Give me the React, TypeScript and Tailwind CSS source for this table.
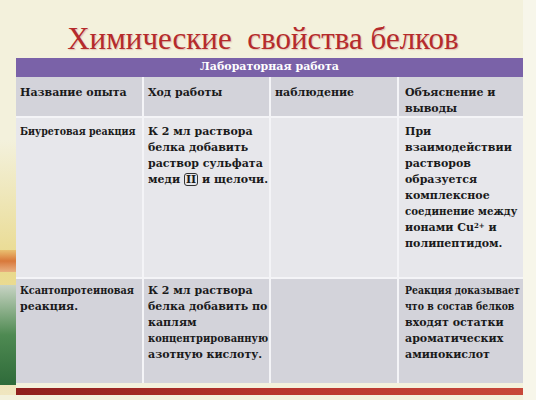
import React from 'react';

const cell = "px-1 pt-1 text-[11px] leading-4 font-bold text-[#1a1a1a] overflow-hidden";

function Lines({ items }: { items: string[] }) {
  return (
    <>
      {items.map((t, i) => (
        <div key={i} className="whitespace-nowrap">{t}</div>
      ))}
    </>
  );
}

// long lines squeezed horizontally, like the stretched slide text
function Tight({ children, k }: { children: React.ReactNode; k: string }) {
  return (
    <div className="whitespace-nowrap">
      <span className={`inline-block origin-left ${k}`}>{children}</span>
    </div>
  );
}

export default function App() {
  return (
    <div
      className="relative w-[536px] h-[400px] overflow-hidden bg-[#f3f1dc] flex flex-col"
      style={{ fontFamily: '"DejaVu Serif", "Liberation Serif", serif' }}
    >
      {/* left decorative picture strip */}
      <div className="absolute left-0 top-[140px] w-[16px] h-[255px] bg-gradient-to-b from-[#f3f1dc] via-[#e9d98a] to-[#f0e6c0]" />
      <div className="absolute left-0 top-[250px] w-[16px] h-[22px] bg-gradient-to-b from-[#e9c070] via-[#d8783a] to-[#e8b080]" />
      <div className="absolute left-0 top-[285px] w-[16px] h-[100px] bg-gradient-to-b from-[#c8d4c4] via-[#4e8a52] to-[#2f6b3a]" />
      <div className="absolute right-0 top-0 w-[13px] h-[400px] bg-[#f7f6ea]" />

      {/* title */}
      <div className="h-[58px] flex items-end justify-center pr-[10px]">
        <h1
          className="text-[31px] leading-none pb-[4px] text-[#b52b2c] whitespace-pre"
          style={{ fontFamily: '"Liberation Serif", serif', textShadow: '1px 1px 1px rgba(180,60,60,0.25)' }}
        >
          Химические  свойства белков
        </h1>
      </div>

      {/* table */}
      <div className="relative ml-[16px] w-[507px] bg-[#f6f6f8] flex flex-col">
        <div className="h-[19px] bg-[#7a62a8] flex items-center justify-center text-white text-[11px] font-bold">
          Лабораторная работа
        </div>
        <div className="grid grid-cols-[126px_125px_126px_124px] gap-x-[2px] bg-[#f4f4f7]">
          {/* header row */}
          <div className="h-[39px] bg-[#d3d3da] px-1 pt-[8px] text-[11px] leading-4 font-bold text-[#1a1a1a]">Название опыта</div>
          <div className="h-[39px] bg-[#d3d3da] px-1 pt-[8px] text-[11px] leading-4 font-bold text-[#1a1a1a]">Ход работы</div>
          <div className="h-[39px] bg-[#d3d3da] px-1 pt-[8px] text-[11px] leading-4 font-bold text-[#1a1a1a]">наблюдение</div>
          <div className="h-[39px] bg-[#d3d3da] pl-[6px] pt-[8px] text-[11px] leading-4 font-bold text-[#1a1a1a]">
            <Lines items={["Объяснение и", "выводы"]} />
          </div>

          {/* row 1 */}
          <div className={`mt-[2px] h-[159px] bg-[#e7e7eb] ${cell} pt-[6px]`}>
            <Tight k="scale-x-[0.86]">Биуретовая реакция</Tight>
          </div>
          <div className={`mt-[2px] h-[159px] bg-[#e7e7eb] ${cell} pt-[6px]`}>
            <Lines items={["К 2 мл раствора", "белка добавить", "раствор сульфата"]} />
            <div className="whitespace-nowrap">
              меди <span className="inline-block border border-[#333] rounded-[3px] px-[1px] leading-[11px]">II</span> и щелочи.
            </div>
          </div>
          <div className="mt-[2px] h-[159px] bg-[#e7e7eb]" />
          <div className={`mt-[2px] h-[159px] bg-[#e7e7eb] pl-[6px] ${cell} pt-[6px]`}>
            <Lines items={["При", "взаимодействии", "растворов", "образуется", "комплексное"]} />
            <Tight k="scale-x-[0.93]">соединение между</Tight>
            <div className="whitespace-nowrap">
              ионами Cu<sup className="text-[7px]">2+</sup> и
            </div>
            <div className="whitespace-nowrap">полипептидом.</div>
          </div>

          {/* row 2 */}
          <div className={`mt-[2px] h-[104px] bg-[#d3d3da] ${cell} pt-[4px]`}>
            <Tight k="scale-x-[0.88]">Ксантопротеиновая</Tight>
            <div className="whitespace-nowrap">реакция.</div>
          </div>
          <div className={`mt-[2px] h-[104px] bg-[#d3d3da] ${cell} pt-[4px]`}>
            <Lines items={["К 2 мл раствора", "белка добавить по", "каплям"]} />
            <Tight k="scale-x-[0.9]">концентрированную</Tight>
            <div className="whitespace-nowrap">азотную кислоту.</div>
          </div>
          <div className="mt-[2px] h-[104px] bg-[#d3d3da]" />
          <div className={`mt-[2px] h-[104px] bg-[#d3d3da] pl-[6px] ${cell} pt-[4px]`}>
            <Tight k="scale-x-[0.85]">Реакция доказывает</Tight>
            <Tight k="scale-x-[0.85]">что в состав белков</Tight>
            <Lines items={["входят остатки", "ароматических", "аминокислот"]} />
          </div>
        </div>
      </div>

      {/* bottom stripe */}
      <div className="mt-[5px] h-[7px] bg-gradient-to-r from-[#8c1f1c] via-[#b8352c] to-[#c8493a]" />
    </div>
  );
}
